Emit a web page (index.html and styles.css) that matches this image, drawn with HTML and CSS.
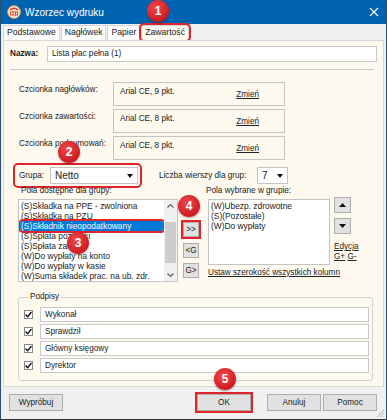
FILE: index.html
```html
<!DOCTYPE html>
<html>
<head>
	<meta charset="utf-8">
	<title>Wzorzec wydruku</title>
	<link rel="stylesheet" href="styles.css">
</head>
<body>
	<div class="window">
		<div class="titlebar">
			<svg class="app-icon" width="14" height="14" viewBox="0 0 14 14">
				<circle cx="7" cy="7" r="6.5" fill="#f4e6cc" stroke="#d98a3a" stroke-width="1"/>
				<path d="M3 5 Q7 1.5 11 5" fill="none" stroke="#d9452b" stroke-width="1.6"/>
				<rect x="3" y="6.5" width="8" height="4" fill="#d9452b"/>
				<rect x="4" y="7.5" width="1.5" height="2" fill="#fff"/>
				<rect x="6.5" y="7.5" width="1.5" height="2" fill="#fff"/>
				<rect x="9" y="7.5" width="1" height="2" fill="#fff"/>
			</svg>
			<span class="title">Wzorzec wydruku</span>
			<svg class="close" width="10" height="10" viewBox="0 0 10 10">
				<path d="M1 1 L9 9 M9 1 L1 9" stroke="#fff" stroke-width="1.1"/>
			</svg>
		</div>

		<div class="tabs">
			<span class="tab">Podstawowe</span>
			<span class="tab">Nagłówek</span>
			<span class="tab">Papier</span>
			<span class="tab active mark">Zawartość</span>
		</div>

		<div class="panel">
			<div class="name-row">
				<label class="name-label">Nazwa:</label>
				<div class="field name-field">Lista płac pełna (1)</div>
			</div>
			<div class="sep"></div>

			<div class="font-rows">
				<div class="font-row">
					<span class="font-label">Czcionka nagłówków:</span>
					<div class="font-box"><span>Arial CE, 9 pkt.</span><a class="link change">Zmień</a></div>
				</div>
				<div class="font-row">
					<span class="font-label">Czcionka zawartości:</span>
					<div class="font-box"><span>Arial CE, 8 pkt.</span><a class="link change">Zmień</a></div>
				</div>
				<div class="font-row">
					<span class="font-label">Czcionka podsumowań:</span>
					<div class="font-box"><span>Arial CE, 8 pkt.</span><a class="link change">Zmień</a></div>
				</div>
			</div>

			<div class="group-row">
				<div class="group-pick mark">
					<label>Grupa:</label>
					<div class="select group-select">Netto<i class="caret"></i></div>
				</div>
				<span class="rows-label">Liczba wierszy dla grup:</span>
				<div class="select rows-select">7<i class="caret"></i></div>
			</div>

			<div class="lists">
				<div class="col-left">
					<div class="cap">Pola dostępne dla grupy:</div>
					<div class="listbox left-list">
						<ul class="items">
							<li>(S)Składka na PPE - zwolniona</li>
							<li>(S)Składka na PZU</li>
							<li class="selected mark">(S)Składnik nieopodatkowany</li>
							<li>(S)Spłata pożyczki</li>
							<li>(S)Spłata zaliczki</li>
							<li>(W)Do wypłaty na konto</li>
							<li>(W)Do wypłaty w kasie</li>
							<li>(W)Suma składek prac. na ub. zdr.</li>
						</ul>
						<div class="scrollbar">
							<svg width="11" height="12" viewBox="0 0 11 12"><path d="M2.5 7.5 L5.5 4.5 L8.5 7.5" fill="none" stroke="#606060" stroke-width="1.2"/></svg>
							<div class="track"><div class="thumb"></div></div>
							<svg width="11" height="12" viewBox="0 0 11 12"><path d="M2.5 4.5 L5.5 7.5 L8.5 4.5" fill="none" stroke="#606060" stroke-width="1.2"/></svg>
						</div>
					</div>
				</div>

				<div class="mid-buttons">
					<button class="btn small mark">&gt;&gt;</button>
					<button class="btn small">&lt;G</button>
					<button class="btn small">G&gt;</button>
				</div>

				<div class="col-right">
					<div class="cap">Pola wybrane w grupie:</div>
					<div class="right-row">
						<div class="listbox right-list">
							<ul class="items">
								<li>(W)Ubezp. zdrowotne</li>
								<li>(S)(Pozostałe)</li>
								<li>(W)Do wypłaty</li>
							</ul>
						</div>
						<div class="side">
							<button class="btn arrow"><svg width="7" height="4" viewBox="0 0 7 4"><path d="M0 4 L3.5 0 L7 4 Z" fill="#111"/></svg></button>
							<button class="btn arrow"><svg width="7" height="4" viewBox="0 0 7 4"><path d="M0 0 L3.5 4 L7 0 Z" fill="#111"/></svg></button>
							<a class="link edit">Edycja</a>
							<div class="gpm"><a class="link">G+</a> <a class="link">G-</a></div>
						</div>
					</div>
					<a class="link widths">Ustaw szerokość wszystkich kolumn</a>
				</div>
			</div>

			<fieldset class="signs">
				<legend>Podpisy</legend>
				<div class="sign-row"><span class="check"><svg width="7" height="7" viewBox="0 0 7 7"><path d="M0.5 3.5 L2.7 5.8 L6.5 1" fill="none" stroke="#111" stroke-width="1.4"/></svg></span><div class="field">Wykonał</div></div>
				<div class="sign-row"><span class="check"><svg width="7" height="7" viewBox="0 0 7 7"><path d="M0.5 3.5 L2.7 5.8 L6.5 1" fill="none" stroke="#111" stroke-width="1.4"/></svg></span><div class="field">Sprawdził</div></div>
				<div class="sign-row"><span class="check"><svg width="7" height="7" viewBox="0 0 7 7"><path d="M0.5 3.5 L2.7 5.8 L6.5 1" fill="none" stroke="#111" stroke-width="1.4"/></svg></span><div class="field">Główny księgowy</div></div>
				<div class="sign-row"><span class="check"><svg width="7" height="7" viewBox="0 0 7 7"><path d="M0.5 3.5 L2.7 5.8 L6.5 1" fill="none" stroke="#111" stroke-width="1.4"/></svg></span><div class="field">Dyrektor</div></div>
			</fieldset>
		</div>

		<div class="footer">
			<button class="btn foot try">Wypróbuj</button>
			<button class="btn foot ok mark">OK</button>
			<button class="btn foot cancel">Anuluj</button>
			<button class="btn foot help">Pomoc</button>
			<svg class="grip" width="10" height="10" viewBox="0 0 10 10">
				<path d="M9 2 L2 9 M9 5 L5 9 M9 8 L8 9" stroke="#b5b5b5" stroke-width="1"/>
			</svg>
		</div>

		<span class="badge b1">1</span>
		<span class="badge b2">2</span>
		<span class="badge b3">3</span>
		<span class="badge b4">4</span>
		<span class="badge b5">5</span>
	</div>
</body>
</html>
```

FILE: styles.css
```css
* {
	box-sizing: border-box;
}

body {
	margin: 0;
	background: #fff;
}

.window {
	position: relative;
	width: 387px;
	height: 420px;
	background: #f0f0f0;
	border: 1px solid #2b4e72;
	border-top: 0;
	border-bottom-color: #333;
	font-family: "Liberation Sans", Arial, sans-serif;
	font-size: 8.2px;
	color: #1b1b1b;
	display: flex;
	flex-direction: column;
	overflow: hidden;
}

.titlebar {
	height: 24px;
	flex: none;
	margin: 0 -1px;
	background: #0063b1;
	display: flex;
	align-items: center;
	padding: 0 8px 0 7px;
	color: #fff;
}

.title {
	font-size: 10px;
	margin-left: 4px;
	flex: 1;
}

.tabs {
	height: 16px;
	flex: none;
	display: flex;
	align-items: flex-end;
	padding-left: 2px;
}

.tab {
	height: 15px;
	line-height: 13px;
	padding: 0 3px;
	border: 1px solid #d4d4d4;
	border-bottom: 0;
	background: #fbfbfb;
	margin-right: 1px;
	font-size: 8.6px;
}

.tab.active {
	background: #fdf9ef;
}

.mark {
	outline: 2px solid #e0242b;
	outline-offset: 0;
	border-radius: 3px;
}

.panel {
	height: 347px;
	flex: none;
	margin: 0 2px;
	background: #fdf9ef;
	border: 1px solid #d9d9d9;
}

.field {
	height: 16px;
	line-height: 14px;
	background: #fff;
	border: 1px solid #c9c9c9;
	padding-left: 4px;
}

.name-row {
	display: flex;
	margin-top: 5px;
	padding: 0 6px;
}

.name-label {
	width: 37px;
	font-weight: bold;
	line-height: 16px;
}

.name-field {
	flex: 1;
}

.sep {
	height: 1px;
	background: #cccccc;
	margin: 7px 9px 0 6px;
}

.font-rows {
	margin-top: 12px;
	display: flex;
	flex-direction: column;
	gap: 3px;
}

.font-row {
	display: flex;
}

.font-label {
	width: 109px;
	padding: 3px 0 0 15px;
}

.font-box {
	width: 172px;
	height: 24px;
	border: 1px solid #c4c4c4;
	display: flex;
	padding: 4px 0 0 6px;
}

.change {
	margin: 3px 25px 0 auto;
}

.link {
	text-decoration: underline;
	color: #222;
}

.group-row {
	display: flex;
	align-items: center;
	margin-top: 5px;
	padding-left: 11px;
	height: 21px;
}

.group-pick {
	width: 125px;
	height: 21px;
	display: flex;
	align-items: center;
	padding-left: 4px;
	gap: 6px;
}

.select {
	position: relative;
	height: 17px;
	line-height: 15px;
	background: #fff;
	border: 1px solid #c4c4c4;
	padding-left: 4px;
	font-size: 10px;
}

.group-select {
	width: 88px;
}

.rows-select {
	width: 31px;
}

.caret {
	position: absolute;
	right: 4px;
	top: 6px;
	border-left: 3.5px solid transparent;
	border-right: 3.5px solid transparent;
	border-top: 4px solid #111;
}

.rows-label {
	margin-left: 19px;
	width: 98px;
}

.lists {
	display: flex;
	padding-left: 14px;
}

.cap {
	height: 10px;
	line-height: 10px;
	padding-left: 3px;
}

.listbox {
	margin-top: 3px;
	background: #fff;
	border: 1px solid #c4c4c4;
	display: flex;
	overflow: hidden;
}

.left-list {
	width: 160px;
	height: 83px;
}

.items {
	list-style: none;
	margin: 0;
	padding: 1px 0 0 1px;
	flex: 1;
	white-space: nowrap;
	overflow: hidden;
	font-size: 8.4px;
}

.items li {
	height: 10px;
	line-height: 10px;
	padding-left: 1px;
}

.items li.selected {
	background: #0078d7;
	color: #fff;
}

.scrollbar {
	width: 13px;
	background: #f0f0f0;
	display: flex;
	flex-direction: column;
	align-items: center;
}

.scrollbar svg {
	flex: none;
}

.track {
	flex: 1;
	width: 11px;
	padding-top: 10px;
	padding-bottom: 6px;
	display: flex;
}

.thumb {
	flex: 1;
	background: #cdcdcd;
}

.mid-buttons {
	margin: 36px 0 0 5px;
	display: flex;
	flex-direction: column;
	gap: 5.5px;
}

.btn {
	font: inherit;
	color: #1b1b1b;
	background: #e1e1e1;
	border: 1px solid #adadad;
	padding: 0;
	border-radius: 0;
}

.btn.small {
	width: 16px;
	height: 15px;
	line-height: 13px;
}

.col-right {
	margin-left: 4px;
}

.right-row {
	display: flex;
	padding-left: 5px;
}

.right-list {
	width: 122px;
	height: 66px;
}

.side {
	margin: 1px 0 0 4px;
	display: flex;
	flex-direction: column;
	align-items: flex-start;
}

.btn.arrow {
	width: 17px;
	height: 16px;
	display: flex;
	align-items: center;
	justify-content: center;
	margin-bottom: 5px;
}

.edit {
	margin-top: 3px;
}

.gpm {
	margin-top: 1px;
}

.widths {
	display: block;
	margin: 3px 0 0 5px;
}

.signs {
	margin: 10px 10px 0 14px;
	padding: 0 3px 7px 5px;
	border: 1px solid #d2d2d2;
	border-radius: 3px;
}

.signs legend {
	margin-left: 4px;
	padding: 0 2px;
	line-height: 10px;
}

.sign-row {
	display: flex;
	align-items: center;
	margin-top: 2px;
}

.sign-row:first-of-type {
	margin-top: 5px;
}

.sign-row .field {
	flex: 1;
	height: 15px;
	line-height: 13px;
}

.check {
	width: 9px;
	height: 9px;
	background: #fff;
	border: 1px solid #8a8a8a;
	margin-right: 7px;
	display: flex;
	align-items: center;
	justify-content: center;
}

.footer {
	flex: 1;
	position: relative;
	padding: 7px 0 0 8px;
	display: flex;
	align-items: flex-start;
}

.btn.foot {
	height: 17px;
	width: 54px;
}

.ok {
	margin-left: 134px;
	width: 52px;
}

.cancel {
	margin-left: 16px;
}

.help {
	margin-left: 2px;
}

.grip {
	position: absolute;
	right: 1px;
	bottom: 1px;
}

.badge {
	position: absolute;
	width: 22px;
	height: 22px;
	border-radius: 50%;
	background: radial-gradient(circle at 40% 35%, #f0484b, #cf1b22 70%, #b3151b);
	box-shadow: 0 1px 2px rgba(0, 0, 0, 0.35);
	color: #fff;
	font-weight: bold;
	font-size: 12px;
	line-height: 22px;
	text-align: center;
}

.b1 { left: 146px; top: 0; }
.b2 { left: 57px; top: 141px; }
.b3 { left: 66px; top: 232px; }
.b4 { left: 177px; top: 195px; }
.b5 { left: 213px; top: 368px; }
```
